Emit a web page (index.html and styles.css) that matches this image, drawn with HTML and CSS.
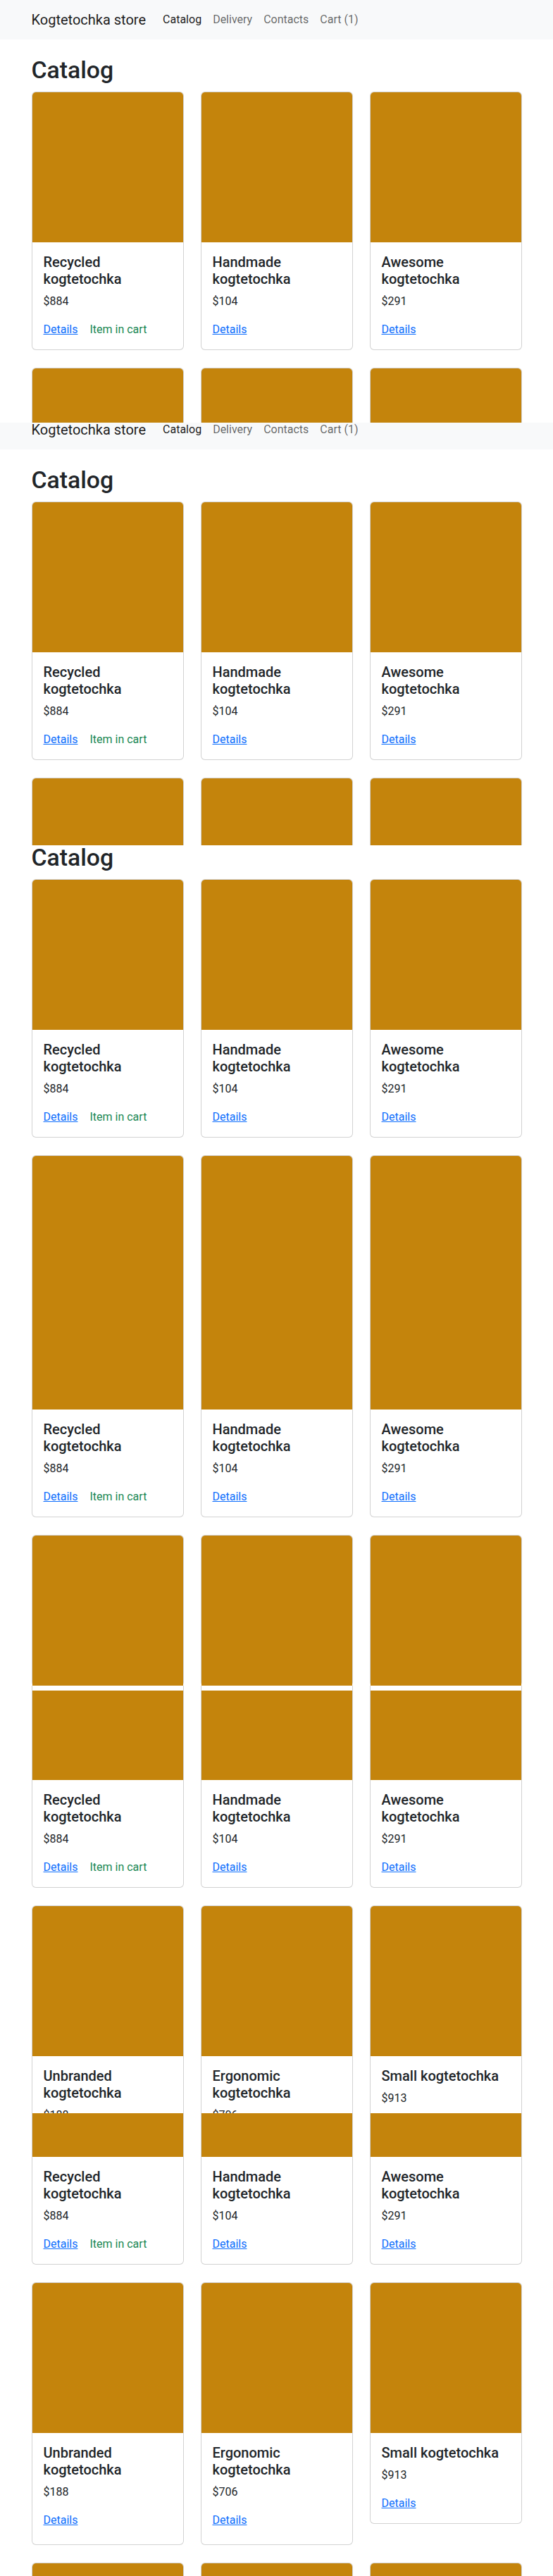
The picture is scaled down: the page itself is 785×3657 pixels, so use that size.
FILE: index.html
```html
<!DOCTYPE html>
<html lang="en">
<head>
<meta charset="utf-8">
<title>Kogtetochka store</title>
<link rel="stylesheet" href="styles.css">
</head>
<body>
<div class="shot">

  <!-- Slice A: top of page -->
  <section class="slice slice-a">
    <nav class="navbar">
      <div class="container nav-inner">
        <a class="brand">Kogtetochka store</a>
        <ul class="nav">
          <li><a class="nav-link active">Catalog</a></li>
          <li><a class="nav-link">Delivery</a></li>
          <li><a class="nav-link">Contacts</a></li>
          <li><a class="nav-link">Cart (1)</a></li>
        </ul>
      </div>
    </nav>
    <main class="container main">
      <h1 class="page-title">Catalog</h1>
      <div class="grid">
        <div class="card"><div class="card-img"></div><div class="card-body"><h5 class="card-title">Recycled kogtetochka</h5><p class="price">$884</p><div class="actions"><a class="link">Details</a><span class="in-cart">Item in cart</span></div></div></div>
        <div class="card"><div class="card-img"></div><div class="card-body"><h5 class="card-title">Handmade kogtetochka</h5><p class="price">$104</p><div class="actions"><a class="link">Details</a></div></div></div>
        <div class="card"><div class="card-img"></div><div class="card-body"><h5 class="card-title">Awesome kogtetochka</h5><p class="price">$291</p><div class="actions"><a class="link">Details</a></div></div></div>
        <div class="card"><div class="card-img tall"></div></div>
        <div class="card"><div class="card-img tall"></div></div>
        <div class="card"><div class="card-img tall"></div></div>
      </div>
    </main>
  </section>

  <!-- Slice B: page scrolled by 18px -->
  <section class="slice slice-b">
    <div class="shift-b">
      <nav class="navbar">
        <div class="container nav-inner">
          <a class="brand">Kogtetochka store</a>
          <ul class="nav">
            <li><a class="nav-link active">Catalog</a></li>
            <li><a class="nav-link">Delivery</a></li>
            <li><a class="nav-link">Contacts</a></li>
            <li><a class="nav-link">Cart (1)</a></li>
          </ul>
        </div>
      </nav>
      <main class="container main">
        <h1 class="page-title">Catalog</h1>
        <div class="grid">
          <div class="card"><div class="card-img"></div><div class="card-body"><h5 class="card-title">Recycled kogtetochka</h5><p class="price">$884</p><div class="actions"><a class="link">Details</a><span class="in-cart">Item in cart</span></div></div></div>
          <div class="card"><div class="card-img"></div><div class="card-body"><h5 class="card-title">Handmade kogtetochka</h5><p class="price">$104</p><div class="actions"><a class="link">Details</a></div></div></div>
          <div class="card"><div class="card-img"></div><div class="card-body"><h5 class="card-title">Awesome kogtetochka</h5><p class="price">$291</p><div class="actions"><a class="link">Details</a></div></div></div>
          <div class="card"><div class="card-img tall"></div></div>
          <div class="card"><div class="card-img tall"></div></div>
          <div class="card"><div class="card-img tall"></div></div>
        </div>
      </main>
    </div>
  </section>

  <!-- Slice C -->
  <section class="slice slice-c">
    <main class="container main shift-c">
      <h1 class="page-title">Catalog</h1>
      <div class="grid">
        <div class="card"><div class="card-img"></div><div class="card-body"><h5 class="card-title">Recycled kogtetochka</h5><p class="price">$884</p><div class="actions"><a class="link">Details</a><span class="in-cart">Item in cart</span></div></div></div>
        <div class="card"><div class="card-img"></div><div class="card-body"><h5 class="card-title">Handmade kogtetochka</h5><p class="price">$104</p><div class="actions"><a class="link">Details</a></div></div></div>
        <div class="card"><div class="card-img"></div><div class="card-body"><h5 class="card-title">Awesome kogtetochka</h5><p class="price">$291</p><div class="actions"><a class="link">Details</a></div></div></div>

        <div class="card"><div class="card-img tall"></div><div class="card-body"><h5 class="card-title">Recycled kogtetochka</h5><p class="price">$884</p><div class="actions"><a class="link">Details</a><span class="in-cart">Item in cart</span></div></div></div>
        <div class="card"><div class="card-img tall"></div><div class="card-body"><h5 class="card-title">Handmade kogtetochka</h5><p class="price">$104</p><div class="actions"><a class="link">Details</a></div></div></div>
        <div class="card"><div class="card-img tall"></div><div class="card-body"><h5 class="card-title">Awesome kogtetochka</h5><p class="price">$291</p><div class="actions"><a class="link">Details</a></div></div></div>

        <div class="card"><div class="card-img"></div></div>
        <div class="card"><div class="card-img"></div></div>
        <div class="card"><div class="card-img"></div></div>
      </div>
    </main>
  </section>

  <!-- Slice D -->
  <section class="slice slice-d">
    <div class="container">
      <div class="grid">
        <div class="card cut-top"><div class="band"></div><div class="card-img flat h127"></div><div class="card-body"><h5 class="card-title">Recycled kogtetochka</h5><p class="price">$884</p><div class="actions"><a class="link">Details</a><span class="in-cart">Item in cart</span></div></div></div>
        <div class="card cut-top"><div class="band"></div><div class="card-img flat h127"></div><div class="card-body"><h5 class="card-title">Handmade kogtetochka</h5><p class="price">$104</p><div class="actions"><a class="link">Details</a></div></div></div>
        <div class="card cut-top"><div class="band"></div><div class="card-img flat h127"></div><div class="card-body"><h5 class="card-title">Awesome kogtetochka</h5><p class="price">$291</p><div class="actions"><a class="link">Details</a></div></div></div>

        <div class="card"><div class="card-img"></div><div class="card-body"><h5 class="card-title">Unbranded kogtetochka</h5><p class="price">$188</p><div class="actions"><a class="link">Details</a></div></div></div>
        <div class="card"><div class="card-img"></div><div class="card-body"><h5 class="card-title">Ergonomic kogtetochka</h5><p class="price">$706</p><div class="actions"><a class="link">Details</a></div></div></div>
        <div class="card"><div class="card-img"></div><div class="card-body"><h5 class="card-title">Small kogtetochka</h5><p class="price">$913</p><div class="actions"><a class="link">Details</a></div></div></div>
      </div>
    </div>
  </section>

  <!-- Slice E -->
  <section class="slice slice-e">
    <div class="container">
      <div class="grid">
        <div class="card cut-top"><div class="card-img flat h62"></div><div class="card-body"><h5 class="card-title">Recycled kogtetochka</h5><p class="price">$884</p><div class="actions"><a class="link">Details</a><span class="in-cart">Item in cart</span></div></div></div>
        <div class="card cut-top"><div class="card-img flat h62"></div><div class="card-body"><h5 class="card-title">Handmade kogtetochka</h5><p class="price">$104</p><div class="actions"><a class="link">Details</a></div></div></div>
        <div class="card cut-top"><div class="card-img flat h62"></div><div class="card-body"><h5 class="card-title">Awesome kogtetochka</h5><p class="price">$291</p><div class="actions"><a class="link">Details</a></div></div></div>

        <div class="card"><div class="card-img"></div><div class="card-body roomy"><h5 class="card-title">Unbranded kogtetochka</h5><p class="price">$188</p><div class="actions"><a class="link">Details</a></div></div></div>
        <div class="card"><div class="card-img"></div><div class="card-body roomy"><h5 class="card-title">Ergonomic kogtetochka</h5><p class="price">$706</p><div class="actions"><a class="link">Details</a></div></div></div>
        <div class="card"><div class="card-img"></div><div class="card-body"><h5 class="card-title">Small kogtetochka</h5><p class="price">$913</p><div class="actions"><a class="link">Details</a></div></div></div>

        <div class="card"><div class="card-img"></div><div class="card-body"><h5 class="card-title">Gorgeous kogtetochka</h5><p class="price">$412</p><div class="actions"><a class="link">Details</a></div></div></div>
        <div class="card"><div class="card-img"></div><div class="card-body"><h5 class="card-title">Sleek kogtetochka</h5><p class="price">$537</p><div class="actions"><a class="link">Details</a></div></div></div>
        <div class="card"><div class="card-img"></div><div class="card-body"><h5 class="card-title">Rustic kogtetochka</h5><p class="price">$265</p><div class="actions"><a class="link">Details</a></div></div></div>
      </div>
    </div>
  </section>

</div>
</body>
</html>
```

FILE: styles.css
```css
* { box-sizing: border-box; }

html, body {
  margin: 0;
  padding: 0;
  background: #fff;
}

body {
  font-family: Roboto, "Liberation Sans", sans-serif;
  font-size: 16px;
  line-height: 1.5;
  color: #212529;
}

.shot {
  display: flex;
  flex-direction: column;
}

.container {
  width: 100%;
  max-width: 720px;
  margin: 0 auto;
  padding: 0 12px;
}

.slice {
  overflow: hidden;
  flex: none;
}
.slice-a { height: 600px; }
.slice-b { height: 600px; }
.slice-c { height: 1193px; }
.slice-d { height: 607px; }
.slice-e { height: 657px; }

.shift-b { margin-top: -18px; }
.container.shift-c { margin-top: -26px; }

/* navbar */
.navbar {
  background: #f8f9fa;
  padding: 8px 0;
}
.nav-inner {
  display: flex;
  align-items: center;
}
.brand {
  font-size: 20px;
  line-height: 30px;
  padding: 5px 0;
  margin-right: 16px;
  color: rgba(0, 0, 0, 0.9);
  white-space: nowrap;
}
.nav {
  display: flex;
  list-style: none;
  margin: 0;
  padding: 0;
}
.nav-link {
  display: block;
  padding: 8px;
  line-height: 24px;
  color: rgba(0, 0, 0, 0.6);
}
.nav-link.active {
  color: rgba(0, 0, 0, 0.9);
}

/* main */
.main {
  padding-top: 24px;
}
.page-title {
  font-size: 33.78px;
  font-weight: 500;
  line-height: 1.2;
  margin: 0 0 9px;
}

.grid {
  display: grid;
  grid-template-columns: repeat(3, 1fr);
  column-gap: 24px;
  row-gap: 25px;
  align-items: start;
}

/* card */
.card {
  display: flex;
  flex-direction: column;
  background: #fff;
  border: 1px solid rgba(0, 0, 0, 0.175);
  border-radius: 6px;
}
.card.cut-top {
  border-top: none;
  border-radius: 0 0 6px 6px;
}
.card-img {
  height: 213px;
  background: #c4840c;
  border-radius: 5px 5px 0 0;
}
.card-img.tall { height: 360px; }
.card-img.flat { border-radius: 0; }
.card-img.h127 { height: 127px; }
.card-img.h62 { height: 62px; }
.band { height: 7px; }

.card-body {
  padding: 16px;
}
.card-body.roomy {
  padding-bottom: 22px;
}
.card-title {
  font-size: 20px;
  font-weight: 500;
  line-height: 1.2;
  margin: 0 0 8px;
}
.price {
  margin: 0 0 16px;
}
.actions {
  display: flex;
  gap: 17px;
}
.link {
  color: #0d6efd;
  text-decoration: underline;
}
.in-cart {
  color: #198754;
}
```
